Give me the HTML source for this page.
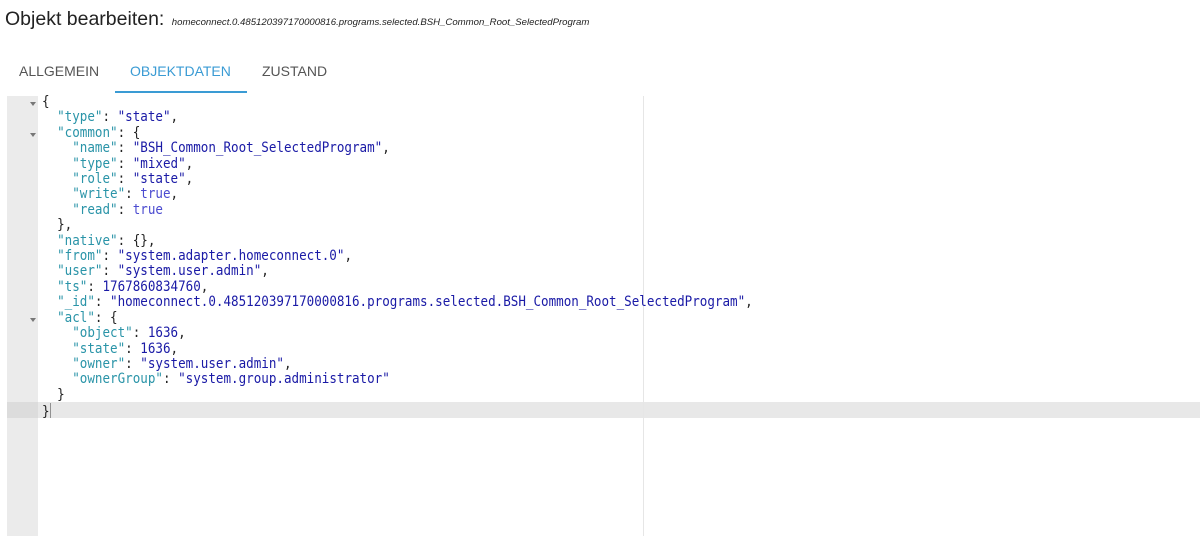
<!DOCTYPE html>
<html><head><meta charset="utf-8"><style>
html,body{margin:0;padding:0;width:1200px;height:536px;overflow:hidden;background:#fff;font-family:"Liberation Sans",sans-serif;}
.title{position:absolute;left:5px;top:8px;font-size:19.5px;color:#222;white-space:nowrap;}
.title small{font-size:9.6px;font-style:italic;margin-left:2px;}
.tab{position:absolute;top:63px;font-size:14px;color:#555;}
.ul{position:absolute;left:115px;top:91px;width:132px;height:2px;background:#3a9bd4;}
.gutter{position:absolute;left:7px;top:96px;width:31px;height:440px;background:#ebebeb;}
.hl{position:absolute;left:38px;top:402px;width:1162px;height:16px;background:#e8e8e8;}
.ghl{position:absolute;left:7px;top:402px;width:31px;height:16px;background:#dcdcdc;}
.vline{position:absolute;left:643px;top:96px;width:1px;height:440px;background:#e6e6e6;}
.code{position:absolute;left:42px;top:95px;font-family:"DejaVu Sans Mono",monospace;font-size:14px;line-height:15.4px;white-space:pre;color:#222;transform:scaleX(0.897);transform-origin:0 0;}
.k{color:#2a94a8}.s{color:#1a1aa6}.b{color:#4b4bd0}.n{color:#1a1aa6}
.arr{position:absolute;left:30px;width:0;height:0;border-left:3px solid transparent;border-right:3px solid transparent;border-top:4px solid #777;}
.cur{display:inline-block;width:1px;height:15px;background:#888;vertical-align:-2px;margin-left:1px;}
</style></head><body>
<div class="title">Objekt bearbeiten: <small>homeconnect.0.485120397170000816.programs.selected.BSH_Common_Root_SelectedProgram</small></div>
<div class="tab" style="left:19px">ALLGEMEIN</div>
<div class="tab" style="left:130px;color:#3a9bd4">OBJEKTDATEN</div>
<div class="tab" style="left:262px">ZUSTAND</div>
<div class="ul"></div>
<div class="gutter"></div>
<div class="hl"></div><div class="ghl"></div>
<div class="vline"></div>
<div class="arr" style="top:102px"></div>
<div class="arr" style="top:133px"></div>
<div class="arr" style="top:318px"></div>
<div class="code">{
  <span class="k">"type"</span>: <span class="s">"state"</span>,
  <span class="k">"common"</span>: {
    <span class="k">"name"</span>: <span class="s">"BSH_Common_Root_SelectedProgram"</span>,
    <span class="k">"type"</span>: <span class="s">"mixed"</span>,
    <span class="k">"role"</span>: <span class="s">"state"</span>,
    <span class="k">"write"</span>: <span class="b">true</span>,
    <span class="k">"read"</span>: <span class="b">true</span>
  },
  <span class="k">"native"</span>: {},
  <span class="k">"from"</span>: <span class="s">"system.adapter.homeconnect.0"</span>,
  <span class="k">"user"</span>: <span class="s">"system.user.admin"</span>,
  <span class="k">"ts"</span>: <span class="n">1767860834760</span>,
  <span class="k">"_id"</span>: <span class="s">"homeconnect.0.485120397170000816.programs.selected.BSH_Common_Root_SelectedProgram"</span>,
  <span class="k">"acl"</span>: {
    <span class="k">"object"</span>: <span class="n">1636</span>,
    <span class="k">"state"</span>: <span class="n">1636</span>,
    <span class="k">"owner"</span>: <span class="s">"system.user.admin"</span>,
    <span class="k">"ownerGroup"</span>: <span class="s">"system.group.administrator"</span>
  }
}<span class="cur"></span></div>
</body></html>
